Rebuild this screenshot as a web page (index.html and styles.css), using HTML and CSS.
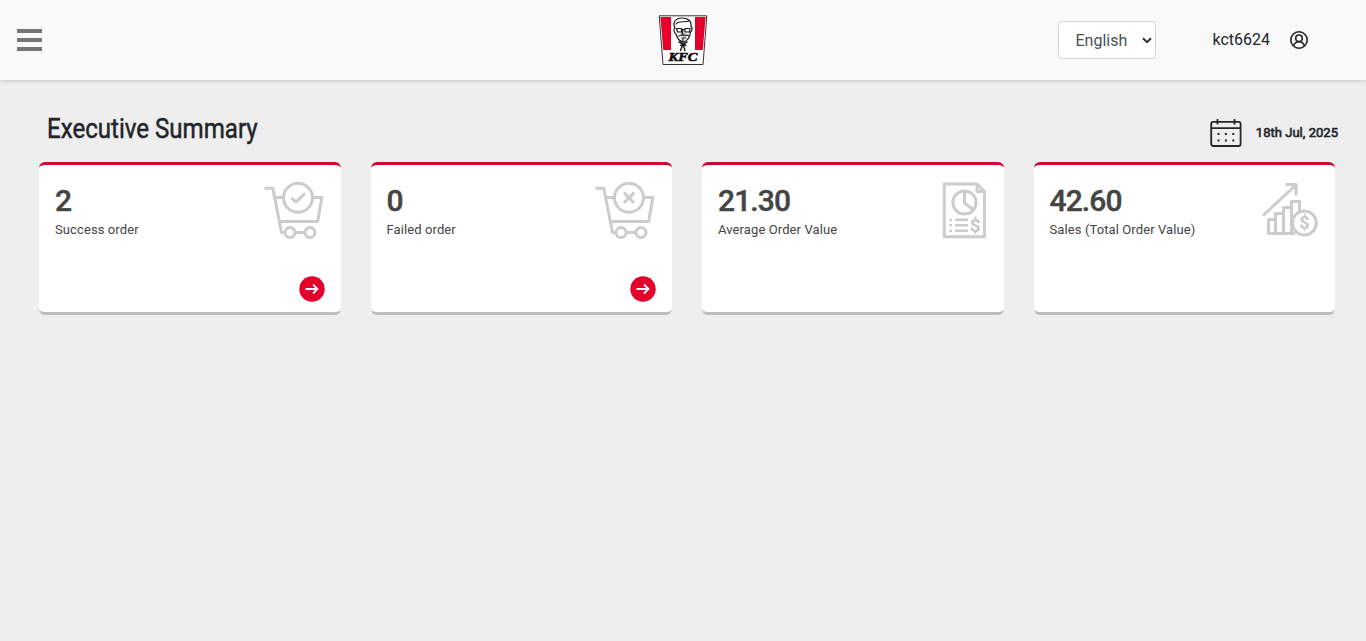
FILE: index.html
```html
<!DOCTYPE html>
<html lang="en">
<head>
<meta charset="utf-8">
<title>Executive Summary</title>
<link rel="stylesheet" href="styles.css">
</head>
<body>
<header class="topbar">
  <button class="menu" aria-label="Menu"><span></span><span></span><span></span></button>
  <svg class="logo" viewBox="0 0 50 52" aria-label="KFC">
    <path d="M1.200 1.800H48.800L45 50.500H5Z" fill="#fff" stroke="#333" stroke-width="1" stroke-linejoin="round"/>
    <path d="M2.400 3H13V36H5.200ZM37 3H47.600L44.800 36H37Z" fill="#e4002b"/>
    <g fill="none" stroke="#171717" stroke-width="1.200" stroke-linecap="round" stroke-linejoin="round">
      <path d="M17 14C14 8 18 4 24 4S34 7 33 13M17 14C15 15 16 19 18 20C19 24 21 27 25 28C30 27 32 23 32.500 18C35 17 34 12 33 13M18 10C21 6 27 9 31 7"/>
      <path d="M18.500 14.500H23.500V18H19.500ZM27 14.500H32L31.500 18H27ZM23.500 15.500H27M25 16L24 20H27M20.500 22L24 21L26 22L29 21L31 22M23.500 24H28M25 25V28"/>
      <path d="M21 28L25 30L29 28M25 30L22.500 36.500M25 30L27 36.500M22.500 31.500L25 30L28 31.500" stroke-width="1.400"/>
    </g>
    <text class="logo-text" x="25" y="47.300" text-anchor="middle" textLength="29" lengthAdjust="spacingAndGlyphs">KFC</text>
  </svg>
  <div class="account">
    <div class="select"><span>English</span>
      <svg width="10" height="7" viewBox="0 0 10 7"><path d="M1 1.200L5 5.200L9 1.200" fill="none" stroke="#333" stroke-width="2"/></svg>
    </div>
    <span class="user">kct6624</span>
    <svg class="avatar" viewBox="0 0 20 20" fill="none" stroke="#222" stroke-width="1.600">
      <circle cx="10" cy="10" r="8.200"/><circle cx="10" cy="8.300" r="3.300"/><path d="M4.600 16C5.300 13.300 7.200 11.800 10 11.800S14.700 13.300 15.400 16"/>
    </svg>
  </div>
</header>
<main>
  <div class="heading">
    <h1>Executive Summary</h1>
    <div class="date">
      <svg width="32" height="29" viewBox="0 0 32 29" fill="none" stroke="#262626" stroke-width="1.800">
        <rect x="1.200" y="3.800" width="29.400" height="24.200" rx="2"/><path d="M1 10.200H31M7.500 1V6.500M24.500 1V6.500"/>
        <path d="M7.500 16H9.500M14.900 16H16.900M22.300 16H24.300M7.500 22.500H9.500M14.900 22.500H16.900M22.300 22.500H24.300" stroke-width="2"/>
      </svg>
      <span>18th Jul, 2025</span>
    </div>
  </div>
  <section class="cards">
    <article class="card">
      <div class="info"><strong>2</strong><span>Success order</span></div>
      <svg class="icon cart" viewBox="0 0 60 60">
        <path d="M.5 7.200H8.800L17.500 51.500H20.500M11 16.500H19M49 16.500H57.800L53.700 40.500H15.500M31.500 51.500H41"/>
        <circle cx="34" cy="16.800" r="14.500"/><circle cx="26" cy="51.500" r="5"/><circle cx="46" cy="51.500" r="5"/>
        <path d="M27.500 16.800L32 21L41 12.300"/>
      </svg>
      <svg class="go" viewBox="0 0 26 26"><circle cx="13" cy="13" r="12.700"/><path d="M6.500 13H18.500M14 8.500L18.500 13L14 17.500"/></svg>
    </article>
    <article class="card">
      <div class="info"><strong>0</strong><span>Failed order</span></div>
      <svg class="icon cart" viewBox="0 0 60 60">
        <path d="M.5 7.200H8.800L17.500 51.500H20.500M11 16.500H19M49 16.500H57.800L53.700 40.500H15.500M31.500 51.500H41"/>
        <circle cx="34" cy="16.800" r="14.500"/><circle cx="26" cy="51.500" r="5"/><circle cx="46" cy="51.500" r="5"/>
        <path d="M28.800 11.600L39.200 22M39.200 11.600L28.800 22"/>
      </svg>
      <svg class="go" viewBox="0 0 26 26"><circle cx="13" cy="13" r="12.700"/><path d="M6.500 13H18.500M14 8.500L18.500 13L14 17.500"/></svg>
    </article>
    <article class="card">
      <div class="info"><strong>21.30</strong><span>Average Order Value</span></div>
      <svg class="icon" viewBox="0 0 60 60">
        <path d="M16.300 3H49L56.500 10.500V55.800H16.300ZM49 3V10.500H56.500"/>
        <circle cx="36.500" cy="21.500" r="11.600"/><path d="M36.500 10V22L45 28.500"/>
        <path class="list" d="M21.500 38.700H24M27 38.700H40M21.500 44.200H24M27 44.200H40M21.500 49.700H24M27 49.700H40"/>
        <text x="47.300" y="50.600" font-size="19">$</text>
      </svg>
    </article>
    <article class="card">
      <div class="info"><strong>42.60</strong><span>Sales (Total Order Value)</span></div>
      <svg class="icon" viewBox="0 0 60 60">
        <path d="M4 34.500L37 4M26.500 3.500H37V14.500"/>
        <path d="M36 52.500H9.500V38.500H16.500V52.500M16.500 40V32.500H24.500V52.500M24.500 34V26.500H32.500V52.500M32.500 28V20.500H40.500V30"/>
        <circle class="coin" cx="45.300" cy="42" r="12"/>
        <text x="45.300" y="48.200" font-size="18">$</text>
      </svg>
    </article>
  </section>
</main>
</body>
</html>
```
FILE: styles.css
```css
* { box-sizing: border-box; }
body {
  margin: 0;
  min-height: 100vh;
  background: #eee;
  color: #212529;
  font-family: Roboto, "Liberation Sans", sans-serif;
}
svg { display: block; flex: none; }
.topbar {
  height: 80px;
  display: grid;
  grid-template-columns: 1fr 50px 1fr;
  align-items: center;
  padding: 0 57px 0 17px;
  background: #f9f9f9;
  box-shadow: 0 1px 4px rgba(0, 0, 0, .17);
}
.menu {
  width: 25px;
  padding: 0;
  border: 0;
  background: none;
  display: grid;
  gap: 5px;
}
.menu span { height: 4px; background: #757575; }
.logo { width: 50px; height: 52px; margin-left: 19.5px; }
.logo-text { font: italic 900 13.5px "Liberation Serif", serif; stroke: #111; stroke-width: .6; }
.account { display: flex; align-items: center; justify-content: flex-end; }
.select {
  width: 98px;
  height: 38px;
  display: flex;
  align-items: center;
  justify-content: space-between;
  padding: 0 3px 0 16px;
  border: 1px solid #ced4da;
  border-radius: 4px;
  background: #fff;
  color: #495057;
  font-size: 16px;
}
.user { margin: -2px 0 0 56px; font-size: 16px; }
.avatar { width: 20px; height: 20px; margin: -1px 0 0 19px; }
main { padding: 29px 31px 0 39px; }
.heading {
  height: 53px;
  display: flex;
  justify-content: space-between;
}
h1 {
  margin: 2px 0 0 8px;
  font-size: 28px;
  line-height: 36px;
  font-weight: 400;
  -webkit-text-stroke: .5px #212529;
  white-space: nowrap;
  transform: scaleX(.86);
  transform-origin: left;
}
.date {
  height: 29px;
  margin: 9px -3px 0 0;
  display: flex;
  align-items: center;
  gap: 14px;
  font-size: 13px;
  font-weight: 400;
  letter-spacing: .03px;
  -webkit-text-stroke: .6px #212529;
}
.cards { display: grid; grid-template-columns: repeat(4, 1fr); gap: 30px; }
.card {
  height: 153px;
  display: grid;
  grid-template-columns: 1fr 60px;
  grid-template-rows: 95px 26px;
  padding: 16px 16px 0;
  border-top: 3px solid #cc092f;
  border-bottom: 3px solid #bdbdbd;
  border-radius: 6px;
  background: #fff;
  color: #444;
}
.info { display: flex; flex-direction: column; white-space: nowrap; }
.info strong {
  font-size: 30px;
  line-height: 40px;
  font-weight: 500;
  letter-spacing: -.9px;
  -webkit-text-stroke: .4px #444;
}
.info span { font-size: 13px; line-height: 17px; letter-spacing: .1px; }
.icon {
  width: 60px;
  height: 60px;
  fill: none;
  stroke: #ccc;
  stroke-width: 3;
  stroke-linejoin: round;
}
.cart { margin-left: -1px; }
.icon .list { stroke-width: 2.5; }
.icon .coin { fill: #fff; }
.icon text { fill: #c8c8c8; stroke: none; font-weight: 700; text-anchor: middle; }
.go { grid-column: 2; width: 26px; height: 26px; justify-self: end; fill: #e4002b; }
.go path { fill: none; stroke: #fff; stroke-width: 1.8; }
```
